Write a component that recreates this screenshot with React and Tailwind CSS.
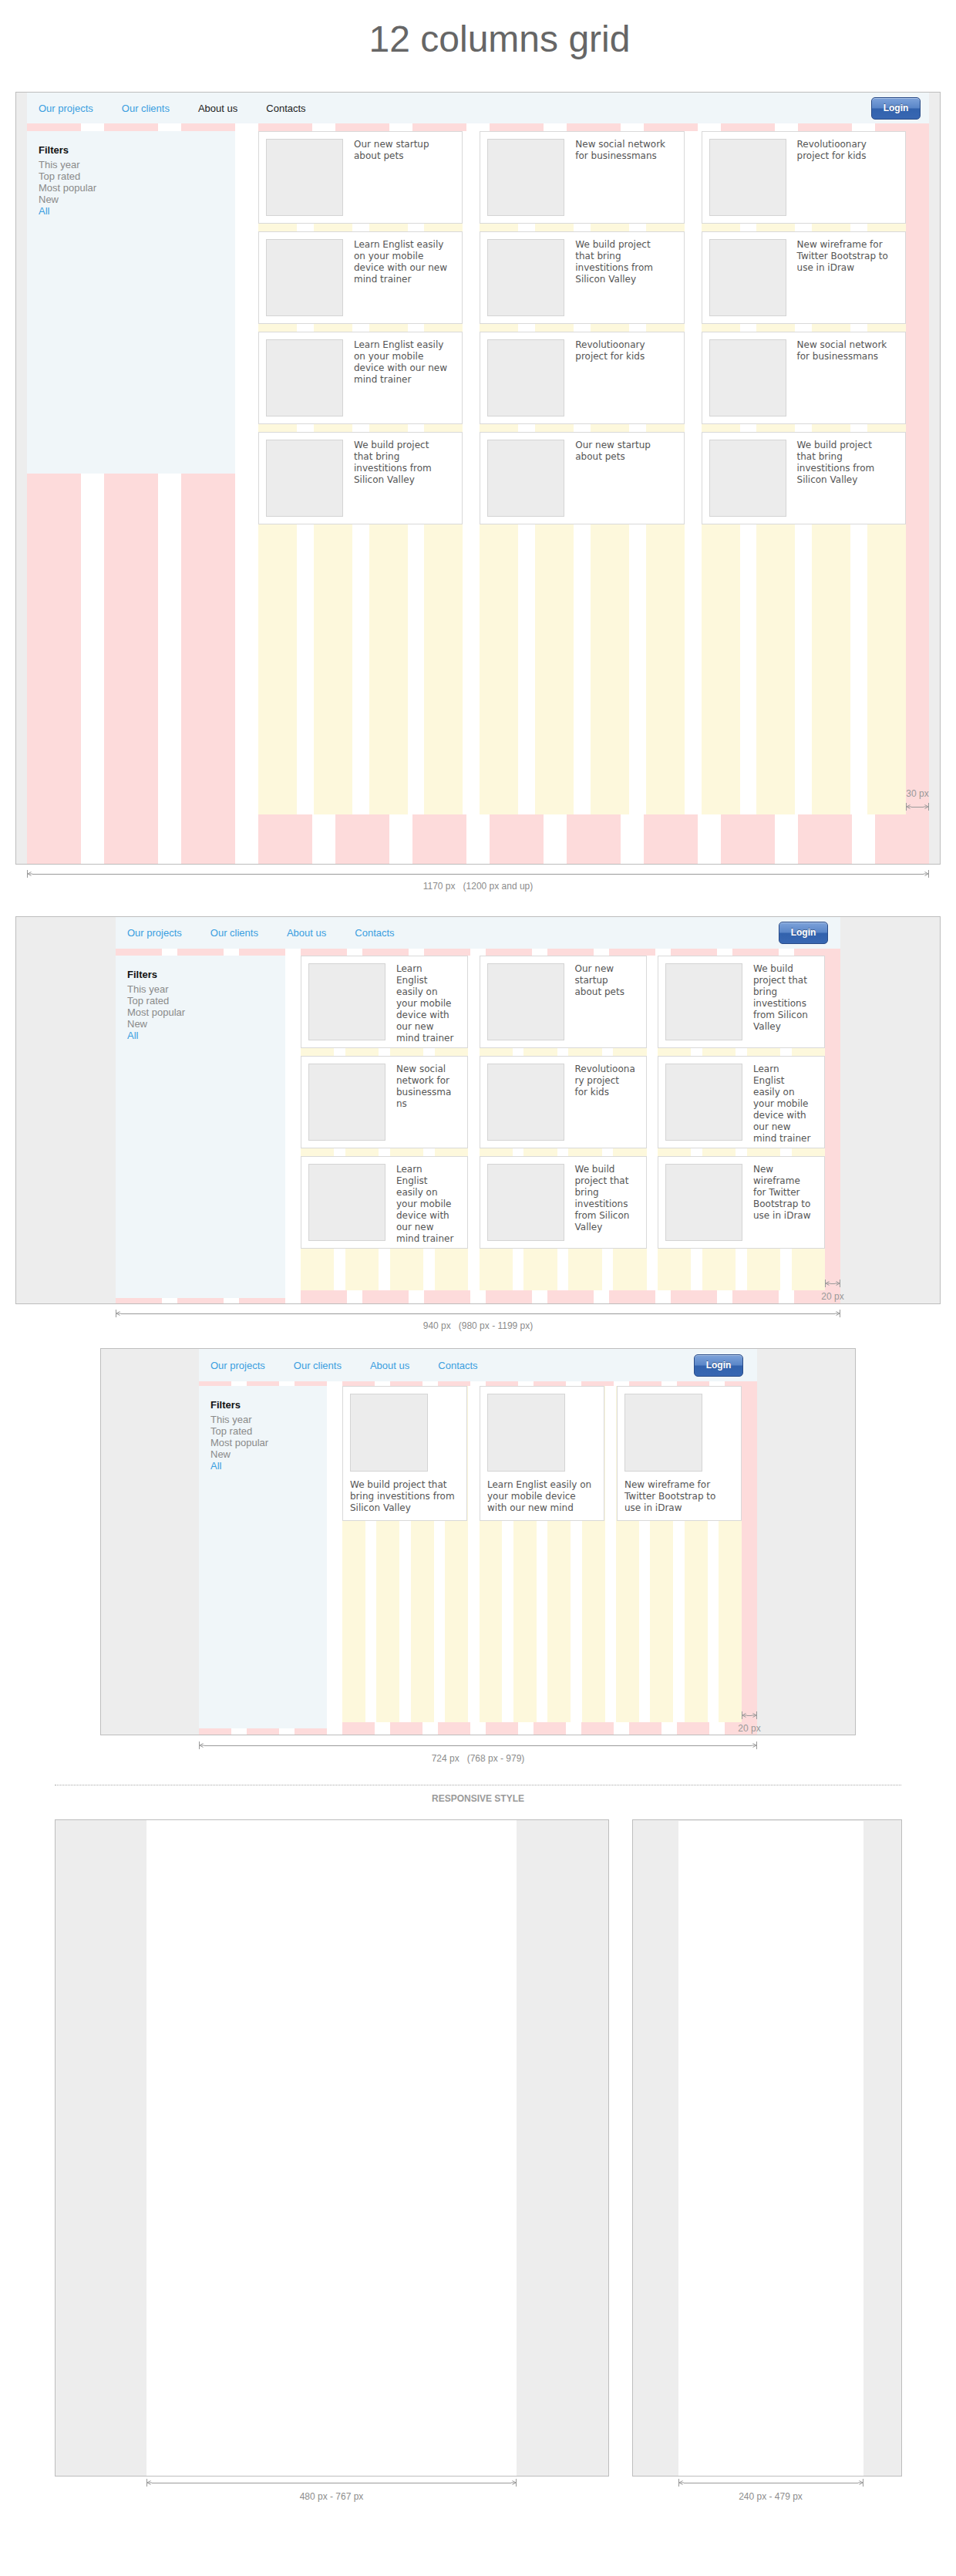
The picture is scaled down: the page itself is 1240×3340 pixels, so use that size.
import React from "react";

const LINKS = ["Our projects", "Our clients", "About us", "Contacts"];

function DimLine({ className }) {
  return (
    <div className={"flex items-center h-[10px] " + className}>
      <svg width="7" height="10" viewBox="0 0 7 10" className="shrink-0 block">
        <path d="M0.5 0V10M0.5 5H7M5.5 2.5L1 5L5.5 7.5" stroke="#9a9a9a" strokeWidth="1" fill="none" />
      </svg>
      <div className="flex-1 h-px bg-[#9a9a9a]" />
      <svg width="7" height="10" viewBox="0 0 7 10" className="shrink-0 block">
        <path d="M6.5 0V10M6.5 5H0M1.5 2.5L6 5L1.5 7.5" stroke="#9a9a9a" strokeWidth="1" fill="none" />
      </svg>
    </div>
  );
}

function Stripes({ wrap, item }) {
  return (
    <div className={wrap}>
      {Array.from({ length: 12 }).map((_, i) => (
        <div key={i} className={item} />
      ))}
    </div>
  );
}

function Login() {
  return (
    <button className="ml-auto w-[64px] h-[29px] rounded-[5px] border border-[#2a4c88] bg-[linear-gradient(#7ea3da,#5a86c8_48%,#3262ad_52%,#3867b2)] text-white font-bold text-[12px] leading-[27px] [text-shadow:0_-1px_0_rgba(0,0,0,0.35)] shadow-[inset_0_1px_0_rgba(255,255,255,0.35)]">
      Login
    </button>
  );
}

function Nav({ cls, dark }) {
  return (
    <div className={"flex items-center bg-[#f0f6f9] pl-[15px] " + cls}>
      <div className="flex gap-[37px] text-[13px] leading-[15px]">
        {LINKS.map((l, i) => (
          <span key={l} className={dark && i >= 2 ? "text-[#1c1c1c]" : "text-[#3a9ee0]"}>
            {l}
          </span>
        ))}
      </div>
      <Login />
    </div>
  );
}

function Sidebar({ cls }) {
  return (
    <div className={"h-[444px] shrink-0 bg-[#f0f6f9] pt-[17px] px-[15px] text-[13px] leading-[15px] " + cls}>
      <div className="font-bold text-[#111] mb-[4px]">Filters</div>
      <div className="text-[#8a8a8a]">This year</div>
      <div className="text-[#8a8a8a]">Top rated</div>
      <div className="text-[#8a8a8a]">Most popular</div>
      <div className="text-[#8a8a8a]">New</div>
      <div className="text-[#3a9ee0]">All</div>
    </div>
  );
}

function CardH({ lines }) {
  return (
    <div className="h-[120px] border border-[#d9d9d9] bg-white p-[9px] flex gap-[14px]">
      <div className="w-[100px] h-[100px] shrink-0 border border-[#d4d4d4] bg-[#ececec]" />
      <div className="text-[12px] leading-[15px] text-[#555] whitespace-nowrap [font-family:'DejaVu_Sans',Verdana,sans-serif]">
        {lines.map((l, i) => (
          <div key={i}>{l}</div>
        ))}
      </div>
    </div>
  );
}

function CardV({ lines }) {
  return (
    <div className="h-[175px] border border-[#d9d9d9] bg-white p-[9px] flex flex-col overflow-hidden">
      <div className="w-[101px] h-[101px] shrink-0 border border-[#d4d4d4] bg-[#ececec]" />
      <div className="mt-[10px] text-[12px] leading-[15px] text-[#555] whitespace-nowrap [font-family:'DejaVu_Sans',Verdana,sans-serif]">
        {lines.map((l, i) => (
          <div key={i}>{l}</div>
        ))}
      </div>
    </div>
  );
}

const PETS = ["Our new startup", "about pets"];
const SOCIAL = ["New social network", "for businessmans"];
const KIDS = ["Revolutioonary", "project for kids"];
const LEARN = ["Learn Englist easily", "on your mobile", "device with our new", "mind trainer"];
const BUILD = ["We build project", "that bring", "investitions from", "Silicon Valley"];
const WIRE = ["New wireframe for", "Twitter Bootstrap to", "use in iDraw"];

const S1 = [PETS, SOCIAL, KIDS, LEARN, BUILD, WIRE, LEARN, KIDS, SOCIAL, BUILD, PETS, BUILD];

const LEARN2 = ["Learn", "Englist", "easily on", "your mobile", "device with", "our new", "mind trainer"];
const BUILD2 = ["We build", "project that", "bring", "investitions", "from Silicon", "Valley"];
const S2 = [
  LEARN2,
  ["Our new", "startup", "about pets"],
  BUILD2,
  ["New social", "network for", "businessma", "ns"],
  ["Revolutioona", "ry project", "for kids"],
  LEARN2,
  LEARN2,
  BUILD2,
  ["New", "wireframe", "for Twitter", "Bootstrap to", "use in iDraw"],
];

const S3 = [
  ["We build project that", "bring investitions from", "Silicon Valley"],
  ["Learn Englist easily on", "your mobile device", "with our new mind"],
  ["New wireframe for", "Twitter Bootstrap to", "use in iDraw"],
];

function Label({ cls, children }) {
  return (
    <p className={"text-center text-[12px] leading-[14px] text-[#8c8c8c] whitespace-pre " + cls}>{children}</p>
  );
}

export default function App() {
  return (
    <div className="w-[1240px] min-h-[3340px] bg-white [font-family:'Liberation_Sans',Arial,sans-serif]">
      <h1 className="pt-[23px] pl-[56px] text-center text-[48px] leading-[56px] text-[#666] font-normal">
        12 columns grid
      </h1>

      {/* Section 1: 1170 */}
      <div className="mt-[40px] mx-auto w-[1200px] border border-[#bdbdbd] bg-[#ededed]">
        <div className="mx-auto w-[1170px]">
          <Nav cls="h-[40px] pr-[11px]" dark />
          <div className="relative grid h-[960px] bg-white">
            <Stripes wrap="col-start-1 row-start-1 flex gap-[30px]" item="flex-1 bg-[#fddbdb]" />
            <div className="col-start-1 row-start-1 flex items-start gap-[30px] pt-[10px]">
              <Sidebar cls="w-[270px]" />
              <div className="grid w-[840px] h-[886px] bg-white">
                <Stripes wrap="col-start-1 row-start-1 flex gap-[21.8px]" item="flex-1 bg-[#fdf8dc]" />
                <div className="col-start-1 row-start-1 grid grid-cols-3 gap-x-[21.8px] gap-y-[10px] content-start">
                  {S1.map((c, i) => (
                    <CardH key={i} lines={c} />
                  ))}
                </div>
              </div>
            </div>
            <div className="absolute right-0 top-[862px] w-[30px] flex flex-col items-center gap-[5px]">
              <span className="text-[12px] leading-[14px] text-[#999] whitespace-nowrap">30 px</span>
              <DimLine className="w-[30px]" />
            </div>
          </div>
        </div>
      </div>
      <DimLine className="mt-[7px] mx-auto w-[1170px]" />
      <Label cls="mt-[4px]">1170 px   (1200 px and up)</Label>

      {/* Section 2: 940 */}
      <div className="mt-[32px] mx-auto w-[1200px] border border-[#bdbdbd] bg-[#ededed]">
        <div className="mx-auto w-[940px]">
          <Nav cls="h-[41px] pr-[16px]" />
          <div className="relative grid h-[460px] bg-white">
            <Stripes wrap="col-start-1 row-start-1 flex gap-[20px]" item="flex-1 bg-[#fddbdb]" />
            <div className="col-start-1 row-start-1 flex items-start gap-[20px] pt-[9px]">
              <Sidebar cls="w-[220px]" />
              <div className="grid w-[680px] h-[434px] bg-white">
                <Stripes wrap="col-start-1 row-start-1 flex gap-[14.5px]" item="flex-1 bg-[#fdf8dc]" />
                <div className="col-start-1 row-start-1 grid grid-cols-3 gap-x-[14.5px] gap-y-[10px] content-start">
                  {S2.map((c, i) => (
                    <CardH key={i} lines={c} />
                  ))}
                </div>
              </div>
            </div>
            <div className="absolute right-0 top-[429px] w-[20px] flex flex-col items-center gap-[5px]">
              <DimLine className="w-[20px]" />
              <span className="text-[12px] leading-[14px] text-[#999] whitespace-nowrap">20 px</span>
            </div>
          </div>
        </div>
      </div>
      <DimLine className="mt-[7px] mx-auto w-[940px]" />
      <Label cls="mt-[4px]">940 px   (980 px - 1199 px)</Label>

      {/* Section 3: 724 */}
      <div className="mt-[22px] mx-auto w-[980px] border border-[#bdbdbd] bg-[#ededed]">
        <div className="mx-auto w-[724px]">
          <Nav cls="h-[42px] pr-[18px]" />
          <div className="relative grid h-[458px] bg-white">
            <Stripes wrap="col-start-1 row-start-1 flex gap-[20px]" item="flex-1 bg-[#fddbdb]" />
            <div className="col-start-1 row-start-1 flex items-start gap-[20px] pt-[6px]">
              <Sidebar cls="w-[166px]" />
              <div className="grid w-[518px] h-[436px] bg-white">
                <Stripes wrap="col-start-1 row-start-1 flex gap-[14.5px]" item="flex-1 bg-[#fdf8dc]" />
                <div className="col-start-1 row-start-1 grid grid-cols-3 gap-x-[16px] content-start">
                  {S3.map((c, i) => (
                    <CardV key={i} lines={c} />
                  ))}
                </div>
              </div>
            </div>
            <div className="absolute right-0 top-[428px] w-[20px] flex flex-col items-center gap-[5px]">
              <DimLine className="w-[20px]" />
              <span className="text-[12px] leading-[14px] text-[#999] whitespace-nowrap">20 px</span>
            </div>
          </div>
        </div>
      </div>
      <DimLine className="mt-[8px] mx-auto w-[724px]" />
      <Label cls="mt-[5px]">724 px   (768 px - 979)</Label>

      {/* Separator */}
      <div className="mt-[27px] mx-auto w-[1098px] border-t border-dotted border-[#a8a8a8]" />
      <p className="mt-[10px] text-center text-[12px] leading-[14px] font-bold text-[#9a9a9a]">RESPONSIVE STYLE</p>

      {/* Responsive frames */}
      <div className="mt-[20px] flex justify-center gap-[30px]">
        <div className="w-[719px]">
          <div className="h-[852px] border border-[#bdbdbd] bg-[#ededed] flex justify-center">
            <div className="w-[480px] bg-white" />
          </div>
          <DimLine className="mt-[3px] mx-auto w-[480px]" />
          <Label cls="mt-[6px]">480 px - 767 px</Label>
        </div>
        <div className="w-[350px]">
          <div className="h-[852px] border border-[#bdbdbd] bg-[#ededed] flex pl-[59px] pt-[1px]">
            <div className="w-[240px] bg-white" />
          </div>
          <DimLine className="mt-[3px] ml-[60px] w-[240px]" />
          <Label cls="mt-[6px] w-[350px] pl-[10px]">240 px - 479 px</Label>
        </div>
      </div>
    </div>
  );
}
